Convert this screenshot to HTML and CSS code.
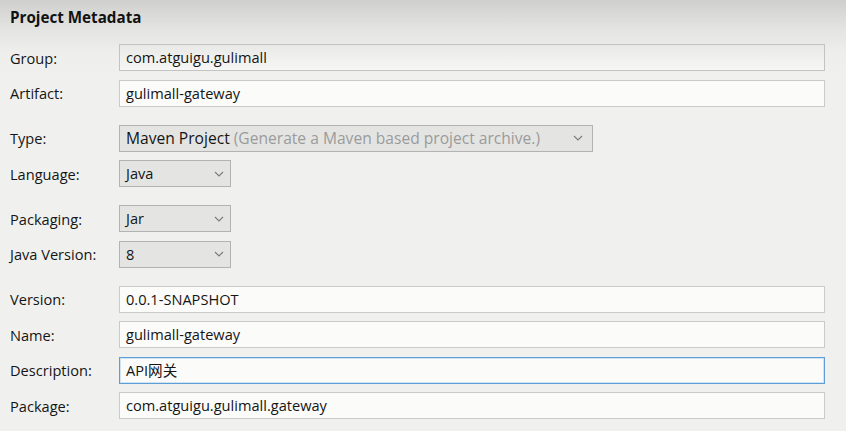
FILE: index.html
```html
<!DOCTYPE html>
<html lang="en">
<head>
<meta charset="utf-8">
<title>Project Metadata</title>
<link rel="stylesheet" href="styles.css">
</head>
<body>
<div class="page">
  <h1 class="title">Project Metadata</h1>
  <div class="form">
    <div class="group">
      <div class="row"><span class="label">Group:</span><div class="field field-top">com.atguigu.gulimall</div></div>
      <div class="row"><span class="label">Artifact:</span><div class="field">gulimall-gateway</div></div>
    </div>
    <div class="group">
      <div class="row"><span class="label">Type:</span>
        <div class="select select-wide"><span class="sel-text">Maven Project <span class="hint">(Generate a Maven based project archive.)</span></span>
          <svg class="chev" width="10" height="6" viewBox="0 0 10 6"><path d="M1 1 L5 5 L9 1" fill="none" stroke="#7a7a7a" stroke-width="1.1"/></svg></div></div>
      <div class="row"><span class="label">Language:</span>
        <div class="select select-small"><span class="sel-text">Java</span>
          <svg class="chev" width="10" height="6" viewBox="0 0 10 6"><path d="M1 1 L5 5 L9 1" fill="none" stroke="#7a7a7a" stroke-width="1.1"/></svg></div></div>
    </div>
    <div class="group">
      <div class="row"><span class="label">Packaging:</span>
        <div class="select select-small"><span class="sel-text">Jar</span>
          <svg class="chev" width="10" height="6" viewBox="0 0 10 6"><path d="M1 1 L5 5 L9 1" fill="none" stroke="#7a7a7a" stroke-width="1.1"/></svg></div></div>
      <div class="row"><span class="label">Java Version:</span>
        <div class="select select-small"><span class="sel-text">8</span>
          <svg class="chev" width="10" height="6" viewBox="0 0 10 6"><path d="M1 1 L5 5 L9 1" fill="none" stroke="#7a7a7a" stroke-width="1.1"/></svg></div></div>
    </div>
    <div class="group">
      <div class="row"><span class="label">Version:</span><div class="field">0.0.1-SNAPSHOT</div></div>
      <div class="row"><span class="label">Name:</span><div class="field">gulimall-gateway</div></div>
      <div class="row"><span class="label">Description:</span><div class="field field-focus">API网关</div></div>
      <div class="row"><span class="label">Package:</span><div class="field">com.atguigu.gulimall.gateway</div></div>
    </div>
  </div>
</div>
</body>
</html>
```
FILE: styles.css
```css
html, body {
  margin: 0;
  padding: 0;
}
body {
  width: 846px;
  height: 431px;
  overflow: hidden;
  background: linear-gradient(to bottom, #cfd0ce 0px, #e3e4e2 28px, #eeefed 52px, #f0f1ef 80px, #f0f1ef 100%);
  font-family: "Open Sans", "Noto Sans CJK SC", sans-serif;
  font-size: 14.6px;
  color: #151515;
}
.page {
  padding: 0 21px 0 10px;
}
.title {
  margin: 0;
  height: 34px;
  line-height: 34px;
  font-size: 15.2px;
  font-weight: 700;
  color: #111;
}
.form {
  margin-top: 10px;
  display: flex;
  flex-direction: column;
  gap: 18px;
}
.group {
  display: flex;
  flex-direction: column;
  gap: 8.5px;
}
.row {
  display: flex;
  align-items: center;
  height: 27px;
}
.label {
  width: 109px;
  flex: none;
  white-space: nowrap;
}
.field {
  box-sizing: border-box;
  flex: 1;
  height: 27px;
  line-height: 25px;
  padding-left: 6px;
  border: 1px solid #cacbc9;
  background: #fbfcfa;
  white-space: nowrap;
}
.field-top {
  background: linear-gradient(to bottom, #e9eae8, #f6f7f5);
  border-color: #c3c4c2;
}
.field-focus {
  border-color: #5d9ed6;
  box-shadow: inset 0 0 0 1px #cfe3f3;
}
.select {
  box-sizing: border-box;
  height: 27px;
  display: flex;
  align-items: center;
  justify-content: space-between;
  padding: 0 10px 0 6px;
  border: 1px solid #b3b3b3;
  background: #e4e5e3;
  white-space: nowrap;
}
.select-wide {
  width: 474px;
  padding-right: 9px;
  font-size: 15.6px;
}
.select-small {
  width: 112px;
  padding-right: 6px;
}
.sel-text {
  line-height: 25px;
}
.hint {
  color: #9b9b9b;
}
.chev {
  display: block;
  flex: none;
}
```
